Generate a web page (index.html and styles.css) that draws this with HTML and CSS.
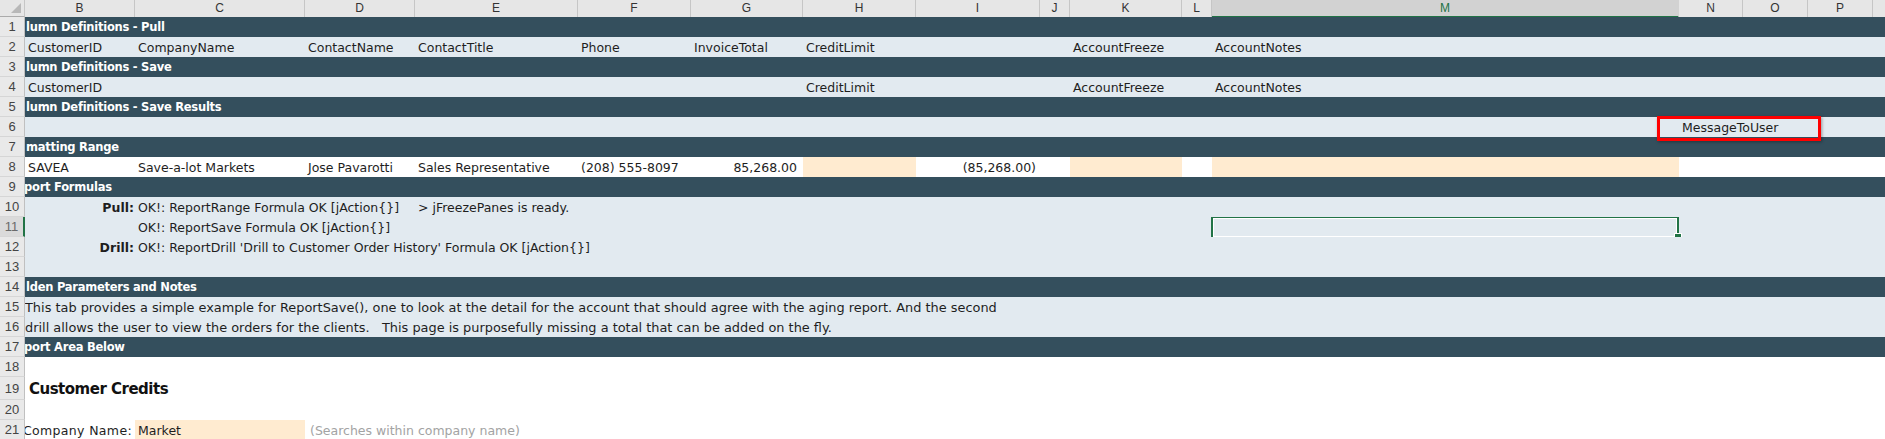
FILE: index.html
```html
<!DOCTYPE html>
<html>
<head>
<meta charset="utf-8">
<link rel="stylesheet" href="styles.css">
</head>
<body>
<div class="sheet">
  <div class="colhdr">
    <div class="corner"></div>
    <div class="cols">
      <div class="ch">B</div><div class="ch">C</div><div class="ch">D</div><div class="ch">E</div>
      <div class="ch">F</div><div class="ch">G</div><div class="ch">H</div><div class="ch">I</div>
      <div class="ch">J</div><div class="ch">K</div><div class="ch">L</div><div class="ch chsel">M</div>
      <div class="ch">N</div><div class="ch">O</div><div class="ch">P</div><div class="ch chlast"></div>
    </div>
  </div>

  <div class="row dark"><div class="rh">1</div><div class="cells"><span class="title">lumn Definitions - Pull</span></div></div>
  <div class="row light"><div class="rh">2</div><div class="cells">
    <span class="c cB">CustomerID</span><span class="c cC">CompanyName</span><span class="c cD">ContactName</span>
    <span class="c cE">ContactTitle</span><span class="c cF">Phone</span><span class="c cG">InvoiceTotal</span>
    <span class="c cH">CreditLimit</span><span class="c cK">AccountFreeze</span><span class="c cM">AccountNotes</span>
  </div></div>
  <div class="row dark"><div class="rh">3</div><div class="cells"><span class="title">lumn Definitions - Save</span></div></div>
  <div class="row light"><div class="rh">4</div><div class="cells">
    <span class="c cB">CustomerID</span><span class="c cH">CreditLimit</span><span class="c cK">AccountFreeze</span><span class="c cM">AccountNotes</span>
  </div></div>
  <div class="row dark"><div class="rh">5</div><div class="cells"><span class="title">lumn Definitions - Save Results</span></div></div>
  <div class="row light callout-row"><div class="rh">6</div><div class="cells">
    <span class="c cN">MessageToUser</span>
  </div><div class="callout"></div></div>
  <div class="row dark"><div class="rh">7</div><div class="cells"><span class="title">matting Range</span></div></div>
  <div class="row white"><div class="rh">8</div><div class="cells">
    <span class="c cB">SAVEA</span><span class="c cC">Save-a-lot Markets</span><span class="c cD">Jose Pavarotti</span>
    <span class="c cE">Sales Representative</span><span class="c cF">(208) 555-8097</span>
    <span class="c cG r num">85,268.00</span><span class="c cH peach"></span>
    <span class="c cI r numi">(85,268.00)</span><span class="c cK peach"></span><span class="c cM peach"></span>
  </div></div>
  <div class="row dark"><div class="rh">9</div><div class="cells"><span class="title tclip">port Formulas</span></div></div>
  <div class="row light"><div class="rh">10</div><div class="cells">
    <span class="c cB r lbl">Pull:</span><span class="c cC">OK!: ReportRange Formula OK [jAction{}]</span>
    <span class="c cE">&gt; jFreezePanes is ready.</span>
  </div></div>
  <div class="row light"><div class="rh rhsel">11</div><div class="cells">
    <span class="c cC">OK!: ReportSave Formula OK [jAction{}]</span><span class="c cM selcell"></span>
  </div></div>
  <div class="row light"><div class="rh">12</div><div class="cells">
    <span class="c cB r lbl">Drill:</span><span class="c cC">OK!: ReportDrill 'Drill to Customer Order History' Formula OK [jAction{}]</span>
  </div></div>
  <div class="row light"><div class="rh">13</div><div class="cells"></div></div>
  <div class="row dark"><div class="rh">14</div><div class="cells"><span class="title">lden Parameters and Notes</span></div></div>
  <div class="row light"><div class="rh">15</div><div class="cells">
    <span class="c cB note">This tab provides a simple example for ReportSave(), one to look at the detail for the account that should agree with the aging report. And the second</span>
  </div></div>
  <div class="row light"><div class="rh">16</div><div class="cells">
    <span class="c cB note">drill allows the user to view the orders for the clients.&nbsp;&nbsp; This page is purposefully missing a total that can be added on the fly.</span>
  </div></div>
  <div class="row dark"><div class="rh">17</div><div class="cells"><span class="title tclip">port Area Below</span></div></div>
  <div class="row white"><div class="rh">18</div><div class="cells"></div></div>
  <div class="row white tall"><div class="rh">19</div><div class="cells"><span class="c cB heading">Customer Credits</span></div></div>
  <div class="row white"><div class="rh">20</div><div class="cells"></div></div>
  <div class="row white"><div class="rh">21</div><div class="cells">
    <span class="c cB r wide">Company Name:</span><span class="c cC peach">Market</span>
    <span class="c cD hint">(Searches within company name)</span>
  </div></div>
</div>
</body>
</html>
```
FILE: styles.css
```css
html, body {
  margin: 0;
  padding: 0;
}
body {
  width: 1885px;
  height: 439px;
  overflow: hidden;
  background: #ffffff;
  font-family: "DejaVu Sans", sans-serif;
  color: #1e1e1e;
}
.sheet {
  display: flex;
  flex-direction: column;
}
.colhdr {
  display: flex;
  height: 17px;
  flex: none;
}
.corner {
  width: 25px;
  flex: none;
  box-sizing: border-box;
  background: #e6e6e6;
  border-right: 1px solid #c6c6c6;
  border-bottom: 1px solid #ababab;
  position: relative;
}
.corner::after {
  content: "";
  position: absolute;
  right: 3px;
  bottom: 3px;
  width: 0;
  height: 0;
  border-left: 10px solid transparent;
  border-bottom: 10px solid #b8b8b8;
}
.cols, .cells {
  flex: 1;
  display: grid;
  grid-template-columns: 110px 170px 110px 163px 113px 112px 113px 124px 30px 112px 30px 467px 64px 65px 65px 1fr;
}
.ch {
  box-sizing: border-box;
  background: #e6e6e6;
  border-right: 1px solid #c6c6c6;
  border-bottom: 1px solid #ababab;
  font-family: "Liberation Sans", sans-serif;
  font-size: 12px;
  line-height: 16px;
  color: #333;
  text-align: center;
}
.chsel {
  background: #d2d2d2;
  color: #217346;
  border-bottom: 2px solid #217346;
  border-right-color: #d2d2d2;
}
.chlast {
  border-right: none;
}
.row {
  display: flex;
  height: 20px;
  flex: none;
}
.row.tall {
  height: 23px;
}
.rh {
  width: 25px;
  flex: none;
  box-sizing: border-box;
  background: #e9e9e9;
  border-right: 1px solid #c0c0c0;
  border-bottom: 1px solid #d6d6d6;
  font-family: "Liberation Sans", sans-serif;
  font-size: 13px;
  color: #444;
  display: flex;
  align-items: center;
  justify-content: center;
  position: relative;
  z-index: 2;
}
.rhsel {
  background: #dadada;
  color: #6a6a6a;
  border-right: 2px solid #217346;
}
.cells {
  overflow: hidden;
  align-items: stretch;
}
.dark .cells {
  background: #344f5d;
}
.light .cells {
  background: #e2eaf0;
}
.white .cells {
  background: #ffffff;
}
.title {
  grid-column: 1 / -1;
  color: #ffffff;
  font-weight: bold;
  font-size: 11.5px;
  letter-spacing: -0.25px;
  display: flex;
  align-items: center;
  padding-left: 1px;
  white-space: nowrap;
}
.tclip {
  margin-left: -2px;
}
.c {
  display: flex;
  align-items: center;
  padding: 0 3px;
  white-space: nowrap;
  font-size: 12.5px;
  min-width: 0;
}
.r {
  justify-content: flex-end;
}
.cB { grid-column: 1; }
.cC { grid-column: 2; }
.cD { grid-column: 3; }
.cE { grid-column: 4; }
.cF { grid-column: 5; }
.cG { grid-column: 6; }
.cH { grid-column: 7; }
.cI { grid-column: 8; }
.cK { grid-column: 10; }
.cM { grid-column: 12; }
.cN { grid-column: 13; }
.num { padding-right: 6px; }
.numi { padding-right: 4px; }
.lbl {
  font-weight: bold;
  padding-right: 1px;
}
.peach {
  background: #ffebd0;
}
.note {
  font-size: 12.9px;
  padding-left: 0;
}
.wide {
  letter-spacing: 0.35px;
}
.heading {
  font-weight: bold;
  font-size: 15px;
  letter-spacing: -0.5px;
  padding-left: 4px;
  align-items: flex-end;
  padding-bottom: 2px;
  color: #111;
}
.hint {
  color: #a3a3a3;
  padding-left: 5px;
}
.selcell {
  position: relative;
}
.selcell::before {
  content: "";
  position: absolute;
  left: -1px;
  right: 0;
  top: -1px;
  bottom: -2px;
  border: 2px solid #217346;
  box-shadow: inset 0 0 0 1px #ffffff;
}
.selcell::after {
  content: "";
  position: absolute;
  right: -3px;
  bottom: -4px;
  width: 6px;
  height: 6px;
  background: #217346;
  border: 1px solid #ffffff;
}
.callout-row {
  position: relative;
}
.callout {
  position: absolute;
  left: 1657px;
  top: -1px;
  width: 164px;
  height: 25px;
  box-sizing: border-box;
  border: 3px solid #ff0000;
  box-shadow: 1px 1px 3px rgba(0, 0, 0, 0.35);
  z-index: 3;
}
```
